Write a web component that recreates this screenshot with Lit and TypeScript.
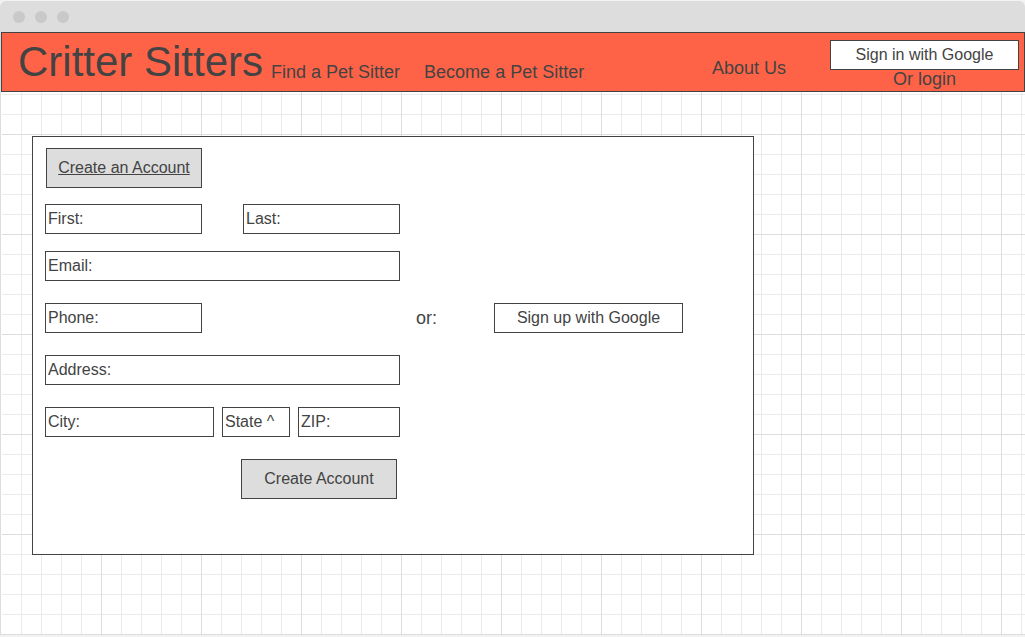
import { LitElement, html, css } from "lit";
import { customElement, property } from "lit/decorators.js";

@customElement("text-field")
class TextField extends LitElement {
  @property() label = "";
  @property() type = "text";

  static styles = css`
    :host {
      display: block;
      min-width: 0;
    }
    .field {
      display: flex;
      align-items: center;
      box-sizing: border-box;
      height: 30px;
      padding: 0 2px;
      border: 1px solid #434343;
      background: #fff;
    }
    .input {
      flex: 1;
      min-width: 0;
      margin-left: 4px;
      padding: 0;
      border: 0;
      outline: 0;
      background: transparent;
      color: inherit;
      font: inherit;
    }
  `;

  render() {
    return html`
      <div class="field">
        <label for="control">${this.label}</label>
        <input class="input" id="control" type=${this.type} />
      </div>
    `;
  }
}

@customElement("app-root")
class AppRoot extends LitElement {
  static styles = css`
    :host {
      display: flex;
      flex-direction: column;
      box-sizing: border-box;
      min-height: 100vh;
      padding: 1px 0 2px;
      background: #f2f2f2;
      color: #434343;
      font: 16px/20px "Liberation Sans", Arial, sans-serif;
    }
    .titlebar {
      display: flex;
      align-items: center;
      gap: 10px;
      height: 31px;
      padding-left: 13px;
      border-radius: 6px 6px 0 0;
      background: #ddd;
    }
    .dot {
      width: 12px;
      height: 12px;
      border-radius: 50%;
      background: #c9c9c9;
    }
    .viewport {
      flex: 1;
      border-left: 1px solid #ddd;
      border-bottom: 1px solid #ddd;
      background-color: #fff;
      background-image: linear-gradient(to right, #ddd 1px, transparent 1px),
        linear-gradient(to bottom, #ddd 1px, transparent 1px),
        linear-gradient(to right, #ebebeb 1px, transparent 1px),
        linear-gradient(to bottom, #ebebeb 1px, transparent 1px);
      background-size: 100px 100px, 100px 100px, 20px 20px, 20px 20px;
      background-position: 0 2px;
      box-shadow: inset 1px 0 #fff;
    }
    .header {
      display: flex;
      align-items: center;
      box-sizing: border-box;
      height: 60px;
      padding: 0 5px 0 16px;
      border: 1px solid #434343;
      background: #ff6347;
      font-size: 18px;
    }
    .brand {
      display: flex;
      align-items: flex-end;
      flex: 1;
    }
    .logo {
      margin: 0;
      font-size: 42px;
      font-weight: 400;
      line-height: 56px;
      white-space: nowrap;
    }
    .nav {
      display: flex;
      gap: 24px;
      margin: 0 0 8px 8px;
    }
    .link {
      color: inherit;
      text-decoration: none;
      white-space: nowrap;
    }
    .about {
      margin: 12px 44px 0 0;
    }
    .signin {
      display: flex;
      flex-direction: column;
      align-items: center;
      padding-top: 4px;
      line-height: 18px;
    }
    .button {
      box-sizing: border-box;
      padding: 0;
      border: 1px solid #434343;
      background: #fff;
      color: inherit;
      font: inherit;
      font-size: 16px;
      text-align: center;
      cursor: pointer;
    }
    .google {
      width: 189px;
      height: 30px;
    }
    .primary {
      display: block;
      width: 156px;
      height: 40px;
      background: #ddd;
      line-height: 38px;
    }
    .heading {
      margin: 0 0 16px 1px;
      text-decoration: underline;
    }
    .panel {
      box-sizing: border-box;
      max-width: 722px;
      min-height: 419px;
      margin: 44px 31px;
      padding: 11px 12px;
      border: 1px solid #434343;
      background: #fff;
    }
    .form {
      display: flex;
      flex-direction: column;
      gap: 22px;
    }
    .group {
      display: flex;
      flex-direction: column;
      gap: 17px;
    }
    .row {
      display: flex;
      align-items: center;
    }
    .column {
      box-sizing: border-box;
      width: 355px;
    }
    .spread {
      justify-content: space-between;
    }
    .locality {
      gap: 8px;
    }
    .half {
      width: 157px;
    }
    .grow {
      flex: 1;
    }
    .zip {
      width: 102px;
    }
    .state {
      appearance: none;
      box-sizing: border-box;
      width: 68px;
      height: 30px;
      padding: 0 2px;
      border: 1px solid #434343;
      border-radius: 0;
      background: #fff;
      color: inherit;
      font: inherit;
    }
    .or {
      width: 78px;
      margin-left: 16px;
      font-size: 18px;
    }
    .actions {
      display: flex;
      justify-content: flex-end;
      padding-right: 3px;
    }
  `;

  render() {
    return html`
      <div class="titlebar">
        <span class="dot"></span><span class="dot"></span><span class="dot"></span>
      </div>
      <div class="viewport">
        <header class="header">
          <div class="brand">
            <h1 class="logo">Critter Sitters</h1>
            <nav class="nav">
              <a class="link" href="#find">Find a Pet Sitter</a>
              <a class="link" href="#become">Become a Pet Sitter</a>
            </nav>
          </div>
          <a class="link about" href="#about">About Us</a>
          <div class="signin">
            <button class="button google" type="button">Sign in with Google</button>
            <a class="link" href="#login">Or login</a>
          </div>
        </header>
        <main class="panel">
          <a class="button primary heading" href="#create">Create an Account</a>
          <form class="form">
            <div class="group">
              <div class="row column spread">
                <text-field class="half" label="First:"></text-field>
                <text-field class="half" label="Last:"></text-field>
              </div>
              <text-field class="column" label="Email:" type="email"></text-field>
            </div>
            <div class="row">
              <div class="column">
                <text-field class="half" label="Phone:" type="tel"></text-field>
              </div>
              <span class="or">or:</span>
              <button class="button google" type="button">Sign up with Google</button>
            </div>
            <text-field class="column" label="Address:"></text-field>
            <div class="row column locality">
              <text-field class="grow" label="City:"></text-field>
              <select class="state" aria-label="State">
                <option>State ^</option>
              </select>
              <text-field class="zip" label="ZIP:"></text-field>
            </div>
            <div class="column actions">
              <button class="button primary" type="submit">Create Account</button>
            </div>
          </form>
        </main>
      </div>
    `;
  }
}
